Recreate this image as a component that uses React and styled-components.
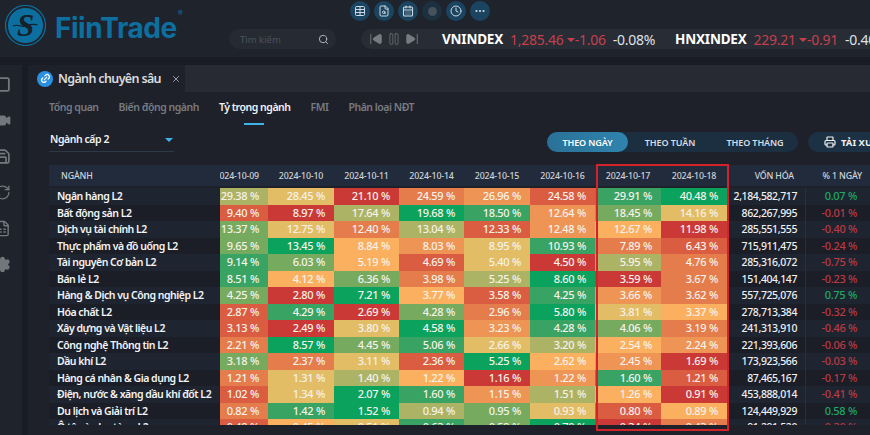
import React from "react";
import styled, { createGlobalStyle } from "styled-components";
import { Search, X, Link2, Video, Save, RefreshCw, FileSpreadsheet, Settings, Printer, Table, FileSearch, CalendarDays, Clock, Ellipsis, SkipBack, SkipForward, Pause, Square } from "lucide-react";

const Global = createGlobalStyle`
  html, body { margin: 0; padding: 0; background: #1b1e26; }
  * { box-sizing: border-box; }
`;

const font = `"Noto Sans", "Noto Sans CJK SC", sans-serif`;

const Page = styled.div`
  width: 870px; height: 435px; overflow: hidden; position: relative;
  display: flex; flex-direction: column;
  background: #191c24; font-family: ${font}; color: #e8eaee;
`;
const Header = styled.header`
  height: 57px; flex: none; display: flex; background: #1f232c;
`;
const Brand = styled.div`
  width: 229px; flex: none; display: flex; align-items: flex-start; padding: 5px 0 0 5px; gap: 9px;
`;
const BrandName = styled.div`
  font-family: "Inter", sans-serif; font-weight: 700; font-size: 28px; line-height: 34px; letter-spacing: -0.45px;
  color: #0c6f9f; margin-top: 6px; position: relative; white-space: nowrap;
  sup { position: absolute; left: 123px; top: -2px; font-size: 7px; line-height: 10px; font-weight: 400; letter-spacing: 0; }
`;
const HeaderRight = styled.div`
  flex: 1; min-width: 0; display: flex; flex-direction: column;
`;
const QuickIcons = styled.div`
  display: flex; gap: 4px; height: 20px; margin: 1px 0 8px 121px;
`;
const QuickIcon = styled.div`
  width: 20px; height: 20px; border-radius: 50%; display: flex; align-items: center; justify-content: center;
  background: ${p => (p.$off ? "#1c3040" : "#1b4460")}; color: ${p => (p.$off ? "#3d4a54" : "#cdd9e2")};
`;
const OffDot = styled.span`
  width: 9px; height: 9px; border-radius: 50%; background: #46525c;
`;
const SearchRow = styled.div`
  display: flex; gap: 25px; height: 20px;
`;
const SearchBox = styled.div`
  width: 107px; flex: none; height: 20px; border-radius: 10px; background: #262a33; display: flex; align-items: center;
  justify-content: space-between; padding: 0 7px 0 11px; font-size: 9.5px; color: #4d525b;
  svg { color: #b9bdc3; flex: none; }
`;
const Ticker = styled.div`
  flex: 1; min-width: 0; height: 20px; background: #282c35; border-radius: 10px 0 0 10px; display: flex; align-items: center;
  padding-left: 8px; overflow: hidden; white-space: nowrap; font-size: 14px; letter-spacing: -0.25px;
`;
const Player = styled.div`
  display: flex; align-items: center; gap: 4px; width: 73px; flex: none; color: #777b80;
  svg { flex: none; }
`;
const IndexName = styled.b`
  font-weight: 700; color: #fff; margin-right: 7px; letter-spacing: -0.2px;
  font-size: 13.5px;
`;
const Value = styled.span` color: #c5404c; `;
const Down = styled.i`
  display: inline-block; width: 0; height: 0; margin: 0 0 2px 3px; border: 4px solid transparent; border-top: 4px solid #c5404c; border-bottom: 0;
  vertical-align: middle;
`;
const Pct = styled.span` color: #dfe2e6; margin: 0 20px 0 7px; `;
const Strip = styled.div` height: 8px; flex: none; background: #191c24; `;
const Body = styled.div` flex: 1; display: flex; min-height: 0; `;
const Sidebar = styled.nav`
  width: 22px; flex: none; background: #1f232c; overflow: hidden; display: flex; flex-direction: column; gap: 19px; padding-top: 11px;
  color: #73777c; margin-right: 6px;
  svg { margin-left: -6px; display: block; flex: none; }
`;
const Main = styled.main`
  flex: 1; min-width: 0; background: #1e212a; display: flex; flex-direction: column; position: relative; overflow: hidden;
`;
const TabBar = styled.div` height: 27px; flex: none; background: #272a33; display: flex; `;
const Tab = styled.div`
  width: 157px; background: #1e212a; display: flex; align-items: center; gap: 5px; padding-left: 9px;
  font-size: 12.5px; font-weight: 600; color: #d9dbde; white-space: nowrap; letter-spacing: -0.65px;
  svg.close { margin-left: 5px; color: #e3e5e8; flex: none; }
`;
const LinkDot = styled.span`
  width: 16px; height: 16px; flex: none; border-radius: 50%; background: #2a90e4; display: flex; align-items: center; justify-content: center; color: #fff;
`;
const SubTabs = styled.div`
  display: flex; gap: 20px; padding: 6px 0 0 21px; height: 32px; flex: none;
`;
const SubTab = styled.div`
  font-size: 10.5px; font-weight: 600; line-height: 18px; color: ${p => (p.$active ? "#f1f2f4" : "#777b81")}; position: relative; white-space: nowrap;
  letter-spacing: -0.47px;
  ${p => p.$active && `&::after { content: ""; position: absolute; left: 25px; bottom: -1px; width: 20px; height: 2px; background: #3fb3e8; }`}
`;
const Controls = styled.div`
  display: flex; justify-content: space-between; align-items: flex-start; padding-left: 21px; height: 41px; flex: none; padding-top: 8px;
`;
const Select = styled.div`
  width: 125px; height: 20px; border-bottom: 1px solid #2c3a48; display: flex; justify-content: space-between; align-items: flex-start; padding: 0 1px;
  font-size: 10.5px; font-weight: 600; line-height: 15px; color: #eef0f2; letter-spacing: -0.45px;
  &::after { content: ""; width: 0; height: 0; margin: 6px 0 0; border: 4px solid transparent; border-top: 4px solid #3fb3e8; border-bottom: 0; }
`;
const Actions = styled.div` display: flex; gap: 10px; flex: none; width: 323px; overflow: hidden; `;
const Segments = styled.div`
  width: 251px; height: 20px; flex: none; border-radius: 10px; background: #1c2f41; display: flex;
`;
const Segment = styled.div`
  width: ${p => p.$w}px; flex: none; border-radius: 10px; display: flex; align-items: center; justify-content: center;
  font-size: 9px; font-weight: 600; color: ${p => (p.$active ? "#fff" : "#d8dde2")}; letter-spacing: -0.1px;
  background: ${p => (p.$active ? "linear-gradient(90deg,#2a7197,#2f84ad)" : "transparent")};
`;
const Download = styled.div`
  width: 80px; flex: none; height: 20px; border-radius: 10px 0 0 10px; background: #1c3143; display: flex; align-items: center; gap: 5px; padding-left: 16px;
  font-size: 9.5px; font-weight: 700; color: #eef1f3; white-space: nowrap;
  svg { flex: none; }
`;
const TableWrap = styled.section` margin-left: 21px; height: 260px; overflow: hidden; flex: none; `;
const columns = "171px 48px 66px 65px 65px 66px 65px 66px 66px 78px 65px";
const HeadRow = styled.div`
  display: grid; grid-template-columns: ${columns}; height: 21px; background: #222b3b; margin-bottom: 2px; align-items: center;
  font-size: 8.8px; font-weight: 500; letter-spacing: -0.15px; color: #cfd3d9; white-space: nowrap;
`;
const HeadCell = styled.div`
  overflow: hidden; display: flex; justify-content: ${p => p.$align || "center"};
  padding-left: ${p => p.$pl || 0}px; padding-right: ${p => p.$pr || 0}px;
`;
const RowList = styled.div` height: 237px; overflow: hidden; `;
const Row = styled.div`
  display: grid; grid-template-columns: ${columns}; height: 16.54px; background: ${p => (p.$odd ? "#1f2530" : "#1b1e26")};
  font-size: 11px; line-height: 16.54px; font-weight: 500; letter-spacing: -0.3px; white-space: nowrap;
`;
const Name = styled.div`
  padding-left: 8px; font-weight: 600; color: #f3f4f6; letter-spacing: -0.48px; font-size: 10.5px;
`;
const palette = ["#0aa25c", "#38a363", "#76aa5f", "#adb365", "#e3bd65", "#fab05f", "#ee9455", "#e47c4c", "#da5c41", "#cb3937"];
const Heat = styled.div`
  background: ${p => palette[p.$level]}; color: #f5f2ea; text-align: right; padding-right: 9px;
`;
const Cap = styled.div` text-align: right; padding-right: 8px; color: #eef0f3; font-size: 10.5px; letter-spacing: -0.4px; `;
const Change = styled.div`
  text-align: right; padding-right: 13px; color: ${p => (p.$up ? "#1fa866" : "#b93a45")}; border-left: 1px solid #2a2f39;
`;
const Highlight = styled.div`
  position: absolute; left: 568px; top: 99px; width: 133px; height: 267px; border: 2px solid #d2232a; pointer-events: none;
`;

const dates = ["024-10-09", "2024-10-10", "2024-10-11", "2024-10-14", "2024-10-15", "2024-10-16", "2024-10-17", "2024-10-18"];
const rows = [
  ["Ngân hàng L2", [["29.38",3],["28.45",4],["21.10",9],["24.59",7],["26.96",6],["24.58",8],["29.91",1],["40.48",0]], "2,184,582,717", "0.07 %", true],
  ["Bất động sản L2", [["9.40",8],["8.97",9],["17.64",3],["19.68",0],["18.50",1],["12.64",6],["18.45",2],["14.16",4]], "862,267,995", "-0.01 %"],
  ["Dịch vụ tài chính L2", [["13.37",2],["12.75",4],["12.40",7],["13.04",3],["12.33",8],["12.48",6],["12.67",5],["11.98",9]], "285,551,555", "-0.40 %"],
  ["Thực phẩm và đồ uống L2", [["9.65",2],["13.45",0],["8.84",5],["8.03",6],["8.95",4],["10.93",1],["7.89",7],["6.43",8]], "715,911,475", "-0.24 %"],
  ["Tài nguyên Cơ bản L2", [["9.14",1],["6.03",2],["5.19",5],["4.69",8],["5.40",4],["4.50",9],["5.95",3],["4.76",7]], "285,316,072", "-0.75 %"],
  ["Bán lẻ L2", [["8.51",1],["4.12",5],["6.36",2],["3.98",7],["5.25",3],["8.60",0],["3.59",9],["3.67",7]], "151,404,147", "-0.23 %"],
  ["Hàng & Dịch vụ Công nghiệp L2", [["4.25",2],["2.80",9],["7.21",0],["3.77",5],["3.58",8],["4.25",1],["3.66",6],["3.62",7]], "557,725,076", "0.75 %", true],
  ["Hóa chất L2", [["2.87",8],["4.29",1],["2.69",9],["4.28",2],["2.96",7],["5.80",0],["3.81",4],["3.37",5]], "278,713,384", "-0.32 %"],
  ["Xây dựng và Vật liệu L2", [["3.13",8],["2.49",9],["3.80",4],["4.58",0],["3.23",6],["4.28",1],["4.06",2],["3.19",7]], "241,313,910", "-0.46 %"],
  ["Công nghệ Thông tin L2", [["2.21",7],["8.57",0],["4.45",2],["5.06",1],["2.66",4],["3.20",3],["2.54",5],["2.24",6]], "221,393,606", "-0.06 %"],
  ["Dầu khí L2", [["3.18",2],["2.37",7],["3.11",4],["2.36",8],["5.25",0],["2.62",5],["2.45",6],["1.69",9]], "173,923,566", "-0.03 %"],
  ["Hàng cá nhân & Gia dụng L2", [["1.21",7],["1.31",4],["1.40",3],["1.22",5],["1.16",9],["1.22",6],["1.60",1],["1.21",8]], "87,465,167", "-0.17 %"],
  ["Điện, nước & xăng dầu khí đốt L2", [["1.02",8],["1.34",4],["2.07",0],["1.60",1],["1.15",6],["1.51",3],["1.26",5],["0.91",9]], "453,888,014", "-0.41 %"],
  ["Du lịch và Giải trí L2", [["0.82",7],["1.42",1],["1.52",0],["0.94",3],["0.95",2],["0.93",4],["0.80",8],["0.89",5]], "124,449,929", "0.58 %", true],
  ["Ô tô và phụ tùng L2", [["0.48",8],["0.45",5],["0.51",4],["0.63",1],["0.59",2],["0.70",0],["0.34",9],["0.43",7]], "91,291,520", "-0.30 %"],
];

const Logo = () => (
  <svg width="41" height="41" viewBox="0 0 41 41" style={{ flex: "none" }}>
    <circle cx="20.5" cy="20.5" r="20" fill="none" stroke="#0c6f9f" strokeWidth="1.2" />
    <circle cx="20.5" cy="20.5" r="17.6" fill="#0c6f9f" />
    <text x="20.5" y="31" textAnchor="middle" fontFamily="Liberation Serif, serif" fontWeight="700" fontStyle="italic" fontSize="31" fill="#16202b">S</text>
    <path d="M8 21c5-2.500 8 1.500 12.500 0s7-2.500 12-1" fill="none" stroke="#16202b" strokeWidth="1.2" />
  </svg>
);

export default function App() {
  return (
    <Page>
      <Global />
      <Header>
        <Brand>
          <Logo />
          <BrandName>FiinTrade<sup>®</sup></BrandName>
        </Brand>
        <HeaderRight>
          <QuickIcons>
            <QuickIcon><Table size={12} strokeWidth={2} /></QuickIcon>
            <QuickIcon><FileSearch size={12} strokeWidth={2} /></QuickIcon>
            <QuickIcon><CalendarDays size={12} strokeWidth={2.2} /></QuickIcon>
            <QuickIcon $off><OffDot /></QuickIcon>
            <QuickIcon><Clock size={12} strokeWidth={2} /></QuickIcon>
            <QuickIcon><Ellipsis size={12} strokeWidth={2.4} /></QuickIcon>
          </QuickIcons>
          <SearchRow>
            <SearchBox>Tìm kiếm<Search size={11} strokeWidth={2} /></SearchBox>
            <Ticker>
              <Player>
                <SkipBack size={14} fill="currentColor" strokeWidth={1.5} />
                <Pause size={14} strokeWidth={1.2} />
                <SkipForward size={14} fill="currentColor" strokeWidth={1.5} />
              </Player>
              <IndexName>VNINDEX</IndexName>
              <Value>1,285.46<Down />-1.06</Value>
              <Pct>-0.08%</Pct>
              <IndexName>HNXINDEX</IndexName>
              <Value>229.21<Down />-0.91</Value>
              <Pct>-0.40%</Pct>
            </Ticker>
          </SearchRow>
        </HeaderRight>
      </Header>
      <Strip />
      <Body>
        <Sidebar>
          <Square size={17} strokeWidth={2.6} />
          <Video size={17} fill="currentColor" strokeWidth={2.2} />
          <Save size={17} strokeWidth={2.4} />
          <RefreshCw size={17} strokeWidth={1.8} />
          <FileSpreadsheet size={17} strokeWidth={2} />
          <Settings size={17} fill="currentColor" strokeWidth={2} />
        </Sidebar>
        <Main>
          <TabBar>
            <Tab>
              <LinkDot><Link2 size={11} strokeWidth={2.6} style={{ transform: "rotate(-45deg)" }} /></LinkDot>
              Ngành chuyên sâu
              <X className="close" size={10} strokeWidth={1.5} />
            </Tab>
          </TabBar>
          <SubTabs>
            <SubTab>Tổng quan</SubTab>
            <SubTab>Biến động ngành</SubTab>
            <SubTab $active>Tỷ trọng ngành</SubTab>
            <SubTab>FMI</SubTab>
            <SubTab>Phân loại NĐT</SubTab>
          </SubTabs>
          <Controls>
            <Select>Ngành cấp 2</Select>
            <Actions>
              <Segments>
                <Segment $w={81} $active>THEO NGÀY</Segment>
                <Segment $w={84}>THEO TUẦN</Segment>
                <Segment $w={86}>THEO THÁNG</Segment>
              </Segments>
              <Download><Printer size={12} strokeWidth={2.4} />TẢI XUỐNG</Download>
            </Actions>
          </Controls>
          <TableWrap>
            <HeadRow>
              <HeadCell $align="flex-start" $pl={12}>NGÀNH</HeadCell>
              {dates.map((d, i) => <HeadCell key={d} $align={i === 0 ? "flex-end" : "center"} $pr={i === 0 ? 9 : 0}>{d}</HeadCell>)}
              <HeadCell $align="flex-end" $pr={11}>VỐN HÓA</HeadCell>
              <HeadCell $align="flex-end" $pr={8}>% 1 NGÀY</HeadCell>
            </HeadRow>
            <RowList>
              {rows.map(([name, cells, cap, change, up], i) => (
                <Row key={name} $odd={i % 2 === 0}>
                  <Name>{name}</Name>
                  {cells.map(([v, level], j) => <Heat key={j} $level={level}>{v} %</Heat>)}
                  <Cap>{cap}</Cap>
                  <Change $up={up}>{change}</Change>
                </Row>
              ))}
            </RowList>
          </TableWrap>
          <Highlight />
        </Main>
      </Body>
    </Page>
  );
}
